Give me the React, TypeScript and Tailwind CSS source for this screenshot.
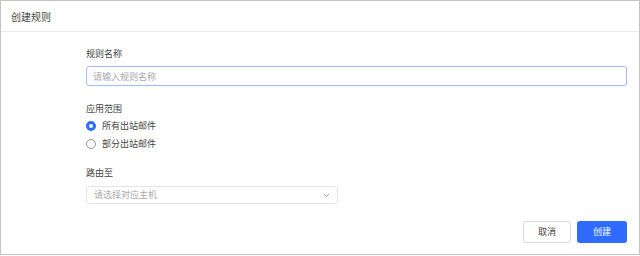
import { ChevronDown } from "lucide-react";

const font = { fontFamily: '"Noto Sans CJK SC", "Noto Sans", sans-serif' };

export default function App() {
  return (
    <div className="w-[640px] h-[256px] bg-white" style={font}>
      <div className="w-[640px] h-[255px] border border-[#c4c4c4] flex flex-col">
        <div className="h-[31px] border-b border-[#ececec] px-[10px] flex items-center text-[10px] text-[#444]">
          创建规则
        </div>

        <div className="flex-1 flex flex-col pl-[85px] pr-[12px] pt-[16px] text-[9px] text-[#444]">
          <div className="leading-[12px]">规则名称</div>
          <input
            className="mt-[6px] h-[20px] w-full rounded-[3px] border border-[#a3b8ff] px-[6px] text-[9px] outline-none placeholder:text-[#aaa]"
            placeholder="请输入规则名称"
          />

          <div className="mt-[17px] leading-[12px]">应用范围</div>
          <div className="mt-[2px] flex items-center gap-[6px] h-[18px]">
            <span className="w-[10px] h-[10px] rounded-full border-[3px] border-[#2f6bff] bg-white" />
            <span>所有出站邮件</span>
          </div>
          <div className="flex items-center gap-[6px] h-[18px]">
            <span className="w-[10px] h-[10px] rounded-full border border-[#999] bg-white" />
            <span>部分出站邮件</span>
          </div>

          <div className="mt-[14px] leading-[12px]">路由至</div>
          <div className="mt-[7px] h-[18px] w-[252px] rounded-[3px] border border-[#e4e4e4] flex items-center justify-between pl-[7px] pr-[6px]">
            <span className="text-[#aaa]">请选择对应主机</span>
            <ChevronDown className="w-[9px] h-[9px] text-[#777]" strokeWidth={2} />
          </div>

          <div className="mt-[17px] flex justify-end gap-[6px]">
            <button className="w-[48px] h-[22px] rounded-[3px] border border-[#dcdcdc] bg-white text-[#444] text-[9px]">
              取消
            </button>
            <button className="w-[50px] h-[22px] rounded-[3px] bg-[#2f6bff] text-white text-[9px]">
              创建
            </button>
          </div>
        </div>
      </div>
    </div>
  );
}
